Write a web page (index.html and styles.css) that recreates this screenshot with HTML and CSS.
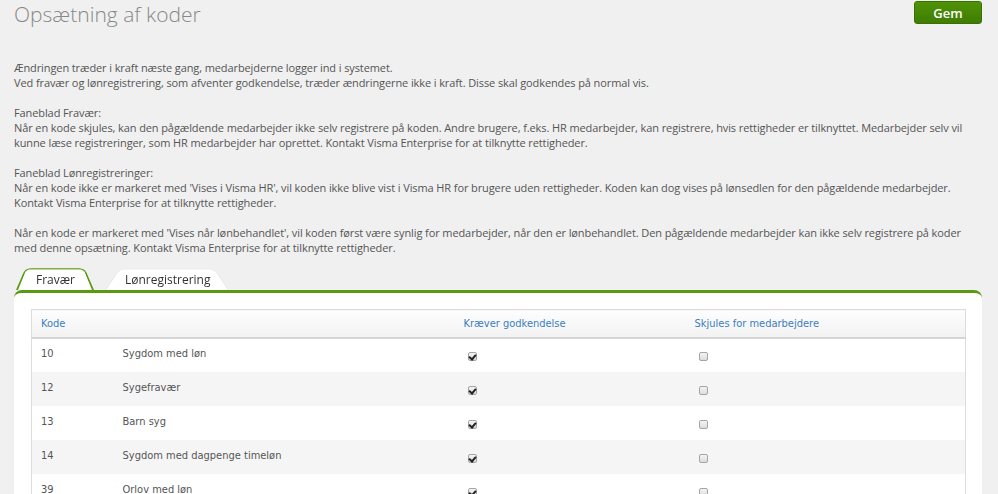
FILE: index.html
```html
<!DOCTYPE html>
<html lang="da">
<head>
    <meta charset="UTF-8">
    <meta name="viewport" content="width=device-width, initial-scale=1.0">
    <title>Opsætning af koder</title>
    <link rel="stylesheet" href="styles.css">
</head>
<body>
    <div class="page">
        <div class="page-head">
            <h1>Opsætning af koder</h1>
            <button class="btn-save">Gem</button>
        </div>

        <!-- Forklaring -->
        <div class="intro">
            <p>Ændringen træder i kraft næste gang, medarbejderne logger ind i systemet.<br>
            Ved fravær og lønregistrering, som afventer godkendelse, træder ændringerne ikke i kraft. Disse skal godkendes på normal vis.</p>
            <p>Faneblad Fravær:<br>
            Når en kode skjules, kan den pågældende medarbejder ikke selv registrere på koden. Andre brugere, f.eks. HR medarbejder, kan registrere, hvis rettigheder er tilknyttet. Medarbejder selv vil kunne læse registreringer, som HR medarbejder har oprettet. Kontakt Visma Enterprise for at tilknytte rettigheder.</p>
            <p>Faneblad Lønregistreringer:<br>
            Når en kode ikke er markeret med 'Vises i Visma HR', vil koden ikke blive vist i Visma HR for brugere uden rettigheder. Koden kan dog vises på lønsedlen for den pågældende medarbejder.<br>
            Kontakt Visma Enterprise for at tilknytte rettigheder.</p>
            <p>Når en kode er markeret med 'Vises når lønbehandlet', vil koden først være synlig for medarbejder, når den er lønbehandlet. Den pågældende medarbejder kan ikke selv registrere på koder med denne opsætning. Kontakt Visma Enterprise for at tilknytte rettigheder.</p>
        </div>

        <div class="tabs">
            <a class="tab active">Fravær</a>
            <a class="tab">Lønregistrering</a>
        </div>

        <div class="panel">
            <table class="codes">
                <thead>
                    <tr>
                        <th class="col-code">Kode</th>
                        <th class="col-name"></th>
                        <th class="col-approve">Kræver godkendelse</th>
                        <th>Skjules for medarbejdere</th>
                    </tr>
                </thead>
                <tbody>
                    <tr>
                        <td>10</td>
                        <td>Sygdom med løn</td>
                        <td><span class="cb checked"></span></td>
                        <td><span class="cb"></span></td>
                    </tr>
                    <tr>
                        <td>12</td>
                        <td>Sygefravær</td>
                        <td><span class="cb checked"></span></td>
                        <td><span class="cb"></span></td>
                    </tr>
                    <tr>
                        <td>13</td>
                        <td>Barn syg</td>
                        <td><span class="cb checked"></span></td>
                        <td><span class="cb"></span></td>
                    </tr>
                    <tr>
                        <td>14</td>
                        <td>Sygdom med dagpenge timeløn</td>
                        <td><span class="cb checked"></span></td>
                        <td><span class="cb"></span></td>
                    </tr>
                    <tr>
                        <td>39</td>
                        <td>Orlov med løn</td>
                        <td><span class="cb checked"></span></td>
                        <td><span class="cb"></span></td>
                    </tr>
                </tbody>
            </table>
        </div>
    </div>
</body>
</html>
```

FILE: styles.css
```css
* {
    margin: 0;
    padding: 0;
    box-sizing: border-box;
}

body {
    font-family: 'Open Sans', 'Liberation Sans', sans-serif;
    background: #f0f0f0;
    color: #555;
    overflow: hidden;
}

.page {
    padding: 0 16px 0 14px;
}

.page-head {
    display: flex;
    justify-content: space-between;
    align-items: flex-start;
    height: 60px;
}

.page-head h1 {
    font-size: 21px;
    font-weight: 300;
    color: #888;
    line-height: 28px;
}

.btn-save {
    margin-top: 1px;
    width: 68px;
    height: 23px;
    background: linear-gradient(#4f9308, #3f7d02);
    border: 1px solid #3a7003;
    border-radius: 3px;
    color: #fff;
    font-family: 'Open Sans', sans-serif;
    font-size: 13px;
    font-weight: 600;
}

.intro {
    font-size: 11px;
    line-height: 15px;
    letter-spacing: -0.1px;
}

.intro p {
    margin-bottom: 15px;
}

.intro p:last-child {
    margin-bottom: 0;
}

/* Faneblade */
.tabs {
    display: flex;
    gap: 11px;
    margin-top: 13px;
    padding-left: 2px;
    height: 22px;
}

.tab {
    position: relative;
    z-index: 1;
    display: block;
    padding: 0 19px 0 20px;
    font-size: 12px;
    line-height: 24px;
    color: #333;
    text-decoration: none;
}

.tab::before {
    content: "";
    position: absolute;
    left: 0;
    right: 0;
    bottom: 0;
    height: 27px;
    z-index: -1;
    background: #fff;
    border: 1px solid #e6e6e6;
    border-bottom: none;
    border-radius: 7px 7px 0 0;
    transform: perspective(16px) rotateX(10deg);
    transform-origin: bottom;
}

.tab.active::before {
    border: 2px solid #5a9a12;
    border-bottom: none;
}

.panel {
    background: #fff;
    border-top: 3px solid #5a9a12;
    border-radius: 8px 8px 0 0;
    padding: 16px 16px 0 17px;
    height: 240px;
}

/* Tabel */
.codes {
    width: 100%;
    border-collapse: collapse;
    font-family: 'DejaVu Sans Condensed', 'DejaVu Sans', sans-serif;
    font-size: 11px;
    color: #555;
    border-left: 1px solid #ddd;
    border-right: 1px solid #ddd;
}

.codes th {
    height: 28px;
    text-align: left;
    font-weight: normal;
    color: #3c7fc0;
    padding: 0 9px;
    background: linear-gradient(#fdfdfd, #f2f2f2);
    border-top: 1px solid #dcdcdc;
    border-bottom: 2px solid #d6d6d6;
}

.codes .col-code {
    width: 82px;
}

.codes .col-name {
    width: 341px;
}

.codes .col-approve {
    width: 231px;
}

.codes td {
    height: 34px;
    padding: 0 9px 3px;
    vertical-align: middle;
}

.codes tbody tr:nth-child(even) td {
    background: #f5f5f5;
}

.cb {
    display: inline-block;
    position: relative;
    top: 4px;
    width: 9px;
    height: 9px;
    margin-left: 4px;
    border: 1px solid #a5a5a5;
    border-radius: 2px;
    background: linear-gradient(#f4f4f4, #dcdcdc);
}

.cb.checked::after {
    content: "";
    position: absolute;
    left: 1px;
    top: 0;
    width: 3px;
    height: 5px;
    border-right: 2px solid #222;
    border-bottom: 2px solid #222;
    transform: rotate(40deg);
}
```
